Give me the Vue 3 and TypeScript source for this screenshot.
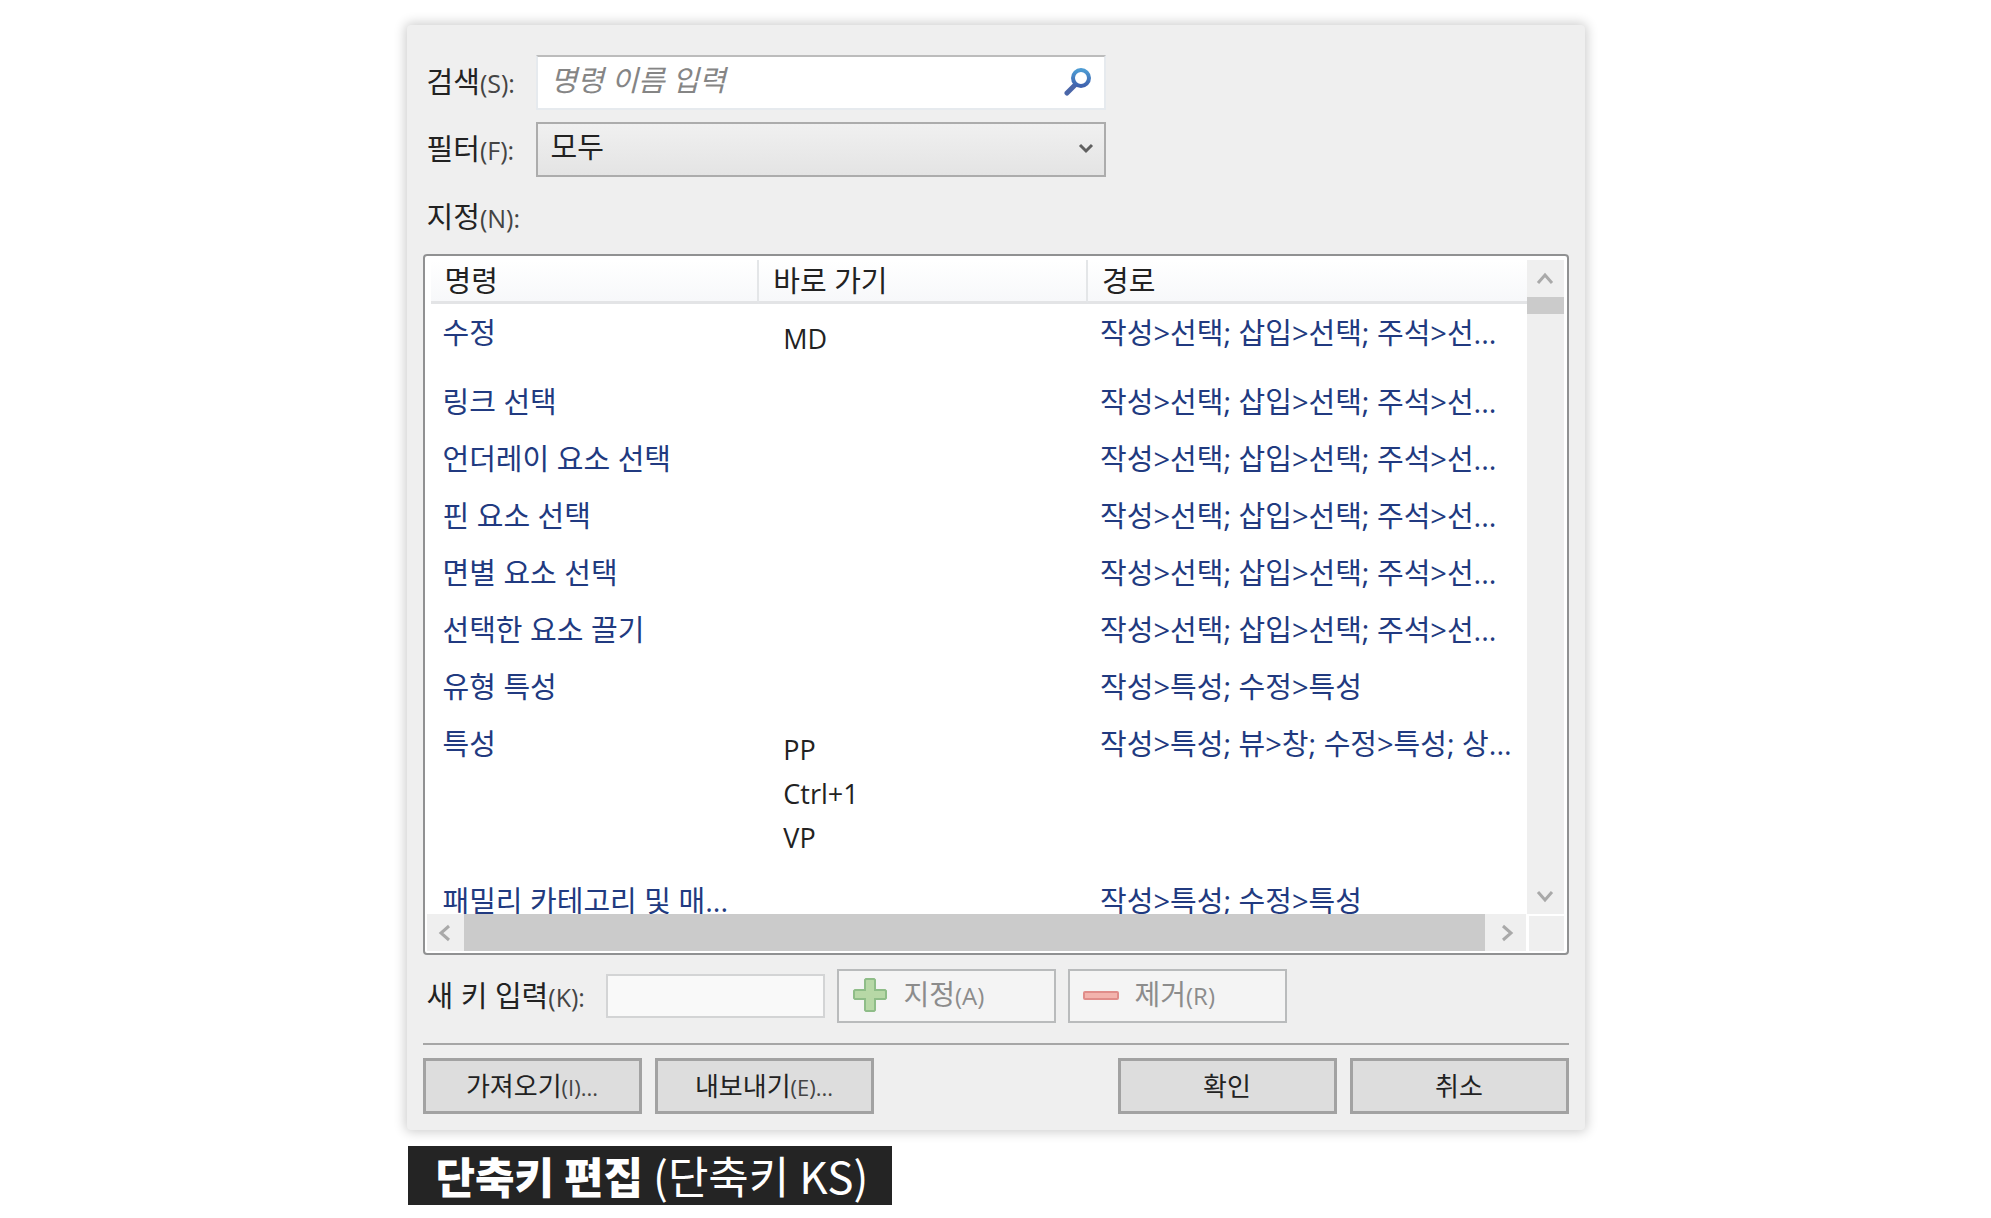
<script setup lang="ts">
import { ref } from 'vue'

interface Command {
  name: string
  keys: string[]
  path: string
}

const selectPath = '작성>선택; 삽입>선택; 주석>선...'

const commands: Command[] = [
  { name: '수정', keys: ['MD'], path: selectPath },
  { name: '링크 선택', keys: [], path: selectPath },
  { name: '언더레이 요소 선택', keys: [], path: selectPath },
  { name: '핀 요소 선택', keys: [], path: selectPath },
  { name: '면별 요소 선택', keys: [], path: selectPath },
  { name: '선택한 요소 끌기', keys: [], path: selectPath },
  { name: '유형 특성', keys: [], path: '작성>특성; 수정>특성' },
  { name: '특성', keys: ['PP', 'Ctrl+1', 'VP'], path: '작성>특성; 뷰>창; 수정>특성; 상...' },
  { name: '패밀리 카테고리 및 매...', keys: [], path: '작성>특성; 수정>특성' },
]

const search = ref('')
const filter = ref('all')
const newKey = ref('')
</script>

<template>
  <main class="page">
    <section class="dialog" aria-label="단축키 편집">
      <div class="field">
        <label for="search">검색<span class="key">(S):</span></label>
        <div class="control">
          <input id="search" v-model="search" class="search" type="text" placeholder="명령 이름 입력" />
          <svg class="search-icon" viewBox="0 0 28 28" aria-hidden="true">
            <defs>
              <linearGradient id="lens" x1="0" y1="0" x2="0" y2="1">
                <stop offset="0" stop-color="#4d9bd3" />
                <stop offset="1" stop-color="#3f62ae" />
              </linearGradient>
            </defs>
            <path d="M12 16 L3 25" stroke="#4a66a8" stroke-width="5" stroke-linecap="round" />
            <circle cx="17" cy="10" r="8" fill="#fff" stroke="url(#lens)" stroke-width="4" />
          </svg>
        </div>
      </div>
      <div class="field">
        <label for="filter">필터<span class="key">(F):</span></label>
        <div class="control">
          <select id="filter" v-model="filter" class="filter">
            <option value="all">모두</option>
          </select>
          <svg class="chevron" viewBox="0 0 16 12" aria-hidden="true">
            <path d="M2 2 L8 8 L14 2" fill="none" stroke="#606060" stroke-width="3" />
          </svg>
        </div>
      </div>
      <div id="assignments" class="list-label">지정<span class="key">(N):</span></div>

      <div class="list">
        <div class="viewport">
          <table aria-labelledby="assignments">
            <colgroup>
              <col class="col-name" />
              <col class="col-keys" />
              <col class="col-path" />
            </colgroup>
            <thead>
              <tr>
                <th scope="col">명령</th>
                <th scope="col">바로 가기</th>
                <th scope="col">경로</th>
              </tr>
            </thead>
            <tbody>
              <tr v-for="c in commands" :key="c.name">
                <td>{{ c.name }}</td>
                <td class="keys"><div v-for="k in c.keys" :key="k">{{ k }}</div></td>
                <td>{{ c.path }}</td>
              </tr>
            </tbody>
          </table>
        </div>
        <div class="vbar">
          <button type="button" class="arrow" aria-label="위로">
            <svg viewBox="0 0 20 20"><path d="M3 14 L10 6 L17 14" /></svg>
          </button>
          <div class="vthumb"></div>
          <button type="button" class="arrow last" aria-label="아래로">
            <svg viewBox="0 0 20 20"><path d="M3 6 L10 14 L17 6" /></svg>
          </button>
        </div>
        <div class="hbar">
          <button type="button" class="arrow" aria-label="왼쪽">
            <svg viewBox="0 0 20 20"><path d="M14 3 L6 10 L14 17" /></svg>
          </button>
          <div class="hthumb"></div>
          <button type="button" class="arrow" aria-label="오른쪽">
            <svg viewBox="0 0 20 20"><path d="M6 3 L14 10 L6 17" /></svg>
          </button>
        </div>
        <div class="corner"></div>
      </div>

      <div class="assign">
        <label for="new-key">새 키 입력<span class="key">(K):</span></label>
        <input id="new-key" v-model="newKey" class="new-key" type="text" />
        <button type="button" class="action" disabled>
          <svg class="action-icon" viewBox="0 0 36 36" aria-hidden="true">
            <path
              d="M14 2 H22 L23 3 V13 H33 L34 14 V21 L33 22 H23 V33 L22 34 H14 L13 33 V22 H3 L2 21 V14 L3 13 H13 V3 Z"
              fill="#b7d8a6"
              stroke="#8fbd88"
              stroke-width="2"
            />
          </svg>
          <span>지정<span class="key">(A)</span></span>
        </button>
        <button type="button" class="action" disabled>
          <svg class="action-icon" viewBox="0 0 36 36" aria-hidden="true">
            <rect x="1" y="15" width="34" height="7" rx="1" fill="#f3b3ad" stroke="#e08d8a" stroke-width="2" />
          </svg>
          <span>제거<span class="key">(R)</span></span>
        </button>
      </div>

      <div class="footer">
        <button type="button" class="command">가져오기<span class="key">(I)...</span></button>
        <button type="button" class="command">내보내기<span class="key">(E)...</span></button>
        <button type="button" class="command push">확인</button>
        <button type="button" class="command">취소</button>
      </div>
    </section>

    <p class="caption"><strong>단축키 편집</strong> (단축키 KS)</p>
  </main>
</template>

<style>
body {
  margin: 0;
  background: #fff;
}
</style>

<style scoped>
.page {
  max-width: 1178px;
  margin: 0 auto;
  padding: 25px 0 12px;
  font-family: "Open Sans", "Noto Sans CJK KR", sans-serif;
  font-size: 29px;
  line-height: 32px;
  color: #222;
}
.page * {
  box-sizing: border-box;
}
input,
select,
button {
  margin: 0;
  font: inherit;
  color: inherit;
  border-radius: 0;
}
.key {
  font-size: 25px;
  color: #444;
}
.dialog {
  padding: 30px 16px 16px;
  background: #efefef;
  border-radius: 4px;
  box-shadow: 0 0 12px 2px rgba(0, 0, 0, 0.2);
}
.field {
  display: flex;
  align-items: center;
  margin-bottom: 12px;
}
.field label {
  width: 113px;
  padding-left: 4px;
}
.control {
  position: relative;
  flex: 0 1 570px;
  height: 55px;
}
.search,
.filter {
  display: block;
  width: 100%;
  height: 100%;
  padding: 0 52px 6px 13px;
}
.search {
  border: 2px solid #e6eaee;
  border-top-color: #bcbcbc;
  background: #fff;
}
.search::placeholder {
  color: #858585;
  font-style: italic;
  opacity: 1;
}
.filter {
  appearance: none;
  border: 2px solid #acacac;
  background: linear-gradient(#f0f0f0, #e4e4e4);
}
.search-icon {
  position: absolute;
  top: 13px;
  right: 14px;
  width: 28px;
  height: 28px;
}
.chevron {
  position: absolute;
  top: 21px;
  right: 12px;
  width: 16px;
  height: 12px;
}
.list-label {
  padding: 12px 4px 20px;
}
.list {
  display: grid;
  grid-template-columns: minmax(0, 1fr) 37px;
  grid-template-rows: 654px 37px;
  padding: 4px 3px 2px 2px;
  border: 2px solid #909192;
  border-radius: 4px;
  background: #fff;
}
.viewport {
  overflow: hidden;
  padding-left: 4px;
}
table {
  width: 100%;
  table-layout: fixed;
  border-collapse: separate;
  border-spacing: 0;
}
.col-name {
  width: 30%;
}
.col-keys {
  width: 30%;
}
th {
  height: 44px;
  padding: 0 14px;
  border-right: 2px solid #e4e6e8;
  border-bottom: 3px solid #e3e4e6;
  background: linear-gradient(#fff, #f7f8fa);
  font-weight: 400;
  text-align: left;
}
th:last-child {
  border-right: 0;
}
td {
  padding: 13px 0 12px 12px;
  vertical-align: top;
  white-space: nowrap;
  color: #213a80;
}
td.keys {
  padding: 13px 0 12px 24px;
  font-size: 27px;
  line-height: 44px;
  color: #222;
}
td.keys:empty {
  padding: 0;
}
.vbar,
.hbar {
  display: flex;
  background: #efefef;
}
.vbar {
  flex-direction: column;
}
.hbar {
  margin-right: 1px;
}
.arrow {
  display: flex;
  flex: 0 0 37px;
  align-items: center;
  justify-content: center;
  padding: 0;
  border: 0;
  background: none;
}
.arrow svg {
  width: 20px;
  height: 20px;
}
.arrow path {
  fill: none;
  stroke: #a9a9a9;
  stroke-width: 3;
}
.vthumb {
  height: 17px;
  background: #cbcbcb;
}
.last {
  margin-top: auto;
}
.hthumb {
  flex: 1;
  margin-right: 4px;
  background: #cbcbcb;
}
.corner {
  margin: 2px 0 0 2px;
  background: #efefef;
}
.assign {
  display: flex;
  align-items: center;
  gap: 12px;
  padding: 14px 0 20px 4px;
  border-bottom: 2px solid #a6a6a6;
}
.assign label {
  width: 167px;
}
.new-key {
  width: 219px;
  height: 44px;
  border: 2px solid #d3d4d5;
  background: #f9f9f9;
}
.action {
  display: flex;
  align-items: center;
  gap: 16px;
  width: 219px;
  height: 54px;
  padding: 0 0 3px 13px;
  border: 2px solid #b9bbbc;
  background: #f4f4f4;
  color: #8c8c8c;
  font-size: 28px;
}
.action .key {
  color: #8c8c8c;
  font-size: 24px;
}
.action-icon {
  width: 36px;
  height: 36px;
}
.footer {
  display: flex;
  gap: 13px;
  padding-top: 13px;
}
.command {
  width: 219px;
  height: 56px;
  padding: 0;
  border: 3px solid #a2a2a2;
  background: #dddddd;
  font-size: 26px;
}
.command .key {
  font-size: 22px;
}
.push {
  margin-left: auto;
}
.caption {
  width: fit-content;
  margin: 16px 0 0 1px;
  padding: 0 24px 0 28px;
  background: #242424;
  color: #fff;
  font-family: "Noto Sans CJK KR", sans-serif;
  font-size: 44px;
  line-height: 59px;
}
.caption strong {
  font-size: 43px;
  font-weight: 900;
}
</style>
